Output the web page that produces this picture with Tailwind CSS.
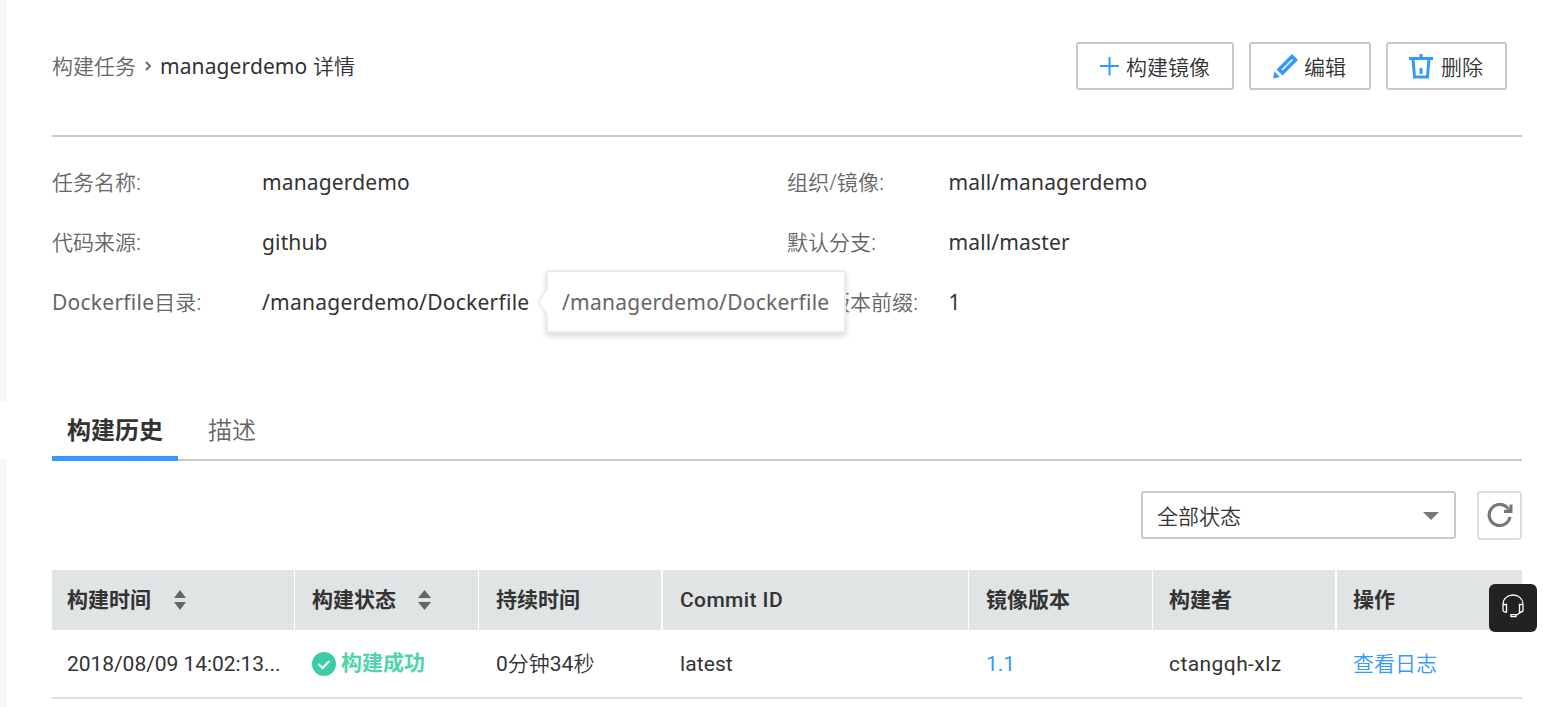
<!DOCTYPE html>
<html lang="zh-CN">
<head>
<meta charset="utf-8">
<title>managerdemo 详情</title>
<script src="https://cdn.jsdelivr.net/npm/@tailwindcss/browser@4"></script>
</head>
<body class="bg-white">
<div class="relative flex h-[707px] w-[1554px] overflow-hidden font-['Noto_Sans','Noto_Sans_CJK_SC',sans-serif] text-[21px] leading-[30px] text-[#333]">
  <aside class="flex w-[7px] shrink-0 flex-col justify-between">
    <div class="h-[402px] bg-[#f6f7f7]"></div>
    <div class="h-[248px] bg-[#f6f7f7]"></div>
  </aside>
  <main class="ml-[45px] w-[1470px]">
    <header class="flex h-[137px] items-start justify-between border-b-2 border-[#c9c9c9] pr-[15px]">
      <nav class="flex items-center pt-[51px]">
        <span class="font-[350] text-[#666]">构建任务</span>
        <svg class="ml-[9px] mr-[9px]" width="7" height="10" viewBox="0 0 7 10" fill="none" stroke="#666" stroke-width="1.8"><path d="M1 1l4 4-4 4"/></svg>
        <span class="-ml-px tracking-[0.1px]">managerdemo <span class="font-[350]">详情</span></span>
      </nav>
      <div class="flex gap-[15px] pt-[42px] font-[350]">
        <button class="flex h-12 w-[158px] items-center rounded-[3px] border-2 border-[#c9c9c9] pl-[21px] pt-[2px]">
          <svg width="21" height="20" viewBox="0 0 21 20" stroke="#3399ff" stroke-width="2"><path d="M1 9h19M10.500 0v18.500"/></svg>
          <span class="ml-[6px]">构建镜像</span>
        </button>
        <button class="flex h-12 w-[122px] items-center rounded-[3px] border-2 border-[#c9c9c9] pl-[22px] pt-[2px]">
          <svg class="-mt-[2px]" width="25" height="25" viewBox="0 0 25 25"><path d="M6 15.500L19 2.500l3.500 3.500L9.500 19z" fill="none" stroke="#3399ff" stroke-width="3.500"/><path d="M0 24.500l1.500-7 5.500 5.500z" fill="#3399ff"/></svg>
          <span class="ml-[6px]">编辑</span>
        </button>
        <button class="flex h-12 w-[121px] items-center rounded-[3px] border-2 border-[#c9c9c9] pl-[22px] pt-[2px]">
          <svg class="-ml-px -mt-[2px]" width="24" height="25" viewBox="0 0 24 25" fill="none" stroke="#3399ff"><path d="M0 4.500h24M4 5l1.500 18h13l1.500-18" stroke-width="3"/><path d="M12 0v4M12 14v6" stroke-width="3"/></svg>
          <span class="ml-[8px]">删除</span>
        </button>
      </div>
    </header>

    <section class="relative mt-[30px] grid grid-cols-[210px_525px_161.500px_1fr] auto-rows-[60px] tracking-[0.15px]">
      <span class="font-[350] tracking-normal text-[#666]">任务名称:</span><span>managerdemo</span>
      <span class="font-[350] text-[#666]">组织/镜像:</span><span>mall/managerdemo</span>
      <span class="font-[350] tracking-normal text-[#666]">代码来源:</span><span>github</span>
      <span class="font-[350] tracking-normal text-[#666]">默认分支:</span><span>mall/master</span>
      <span class="font-[350] tracking-normal text-[#666]"><span class="font-normal tracking-[0.25px]">Dockerfile</span>目录:</span><span class="tracking-[0.25px]">/managerdemo/Dockerfile</span>
      <span class="font-[350] tracking-normal text-[#666]">镜像版本前缀:</span><span>1</span>
      <div class="absolute left-[494px] top-[103px] flex h-[63px] w-[300px] items-center rounded-[2px] border-2 border-[#ececec] bg-white pl-[14px] text-[#666] shadow-[0_3px_6px_rgba(0,0,0,0.16)]">
        <svg class="absolute -left-[12px] top-[14px]" width="13" height="32" viewBox="0 0 13 32"><path d="M12 1.500L2 16l10 14.500" fill="#fff" stroke="#ececec" stroke-width="2"/><path d="M13 0v32h-1V0z" fill="#fff"/></svg>
        <span class="tracking-[0.25px]">/managerdemo/Dockerfile</span>
      </div>
    </section>

    <nav class="mt-[56px] flex h-[58px] items-stretch border-b-2 border-[#c9c9c9] text-2xl">
      <a class="relative w-[126px] pl-[15px] pt-[11px] font-bold">构建历史<span class="absolute -bottom-[2px] left-0 h-[5px] w-full bg-[#3399ff]"></span></a>
      <a class="pl-[30px] pt-[11px] font-[350] text-[#666]">描述</a>
    </nav>

    <div class="mt-[30px] flex justify-end gap-[21px]">
      <div class="flex h-12 w-[315px] items-center justify-between rounded-[3px] border-2 border-[#c9c9c9] pl-[14px] pr-[15px] pt-[2px] font-[350]">
        <span>全部状态</span>
        <svg width="16" height="8" viewBox="0 0 16 8"><path d="M0 0h16L8 8z" fill="#777"/></svg>
      </div>
      <button class="flex h-[49px] w-[45px] items-center justify-center rounded-[4px] border-2 border-[#ddd]">
        <svg width="26" height="26" viewBox="0 0 26 26"><path d="M21 5.500A10.500 10.500 0 1 0 23 14" fill="none" stroke="#777" stroke-width="3.200"/><path d="M25.500 1.500v8.500h-8.500v-3l3.500-.5 2-2V1.500z" fill="#777"/></svg>
      </button>
    </div>

    <div class="mt-[30px] font-[Roboto,'Noto_Sans_CJK_SC',sans-serif]">
      <div class="grid h-[60px] grid-cols-[243px_184px_184px_306px_184px_184px_185px] bg-[#e0e4e5] font-bold [&>*]:flex [&>*]:items-center [&>*]:border-white [&>*]:pl-[15px]">
        <div class="border-r">构建时间<svg class="ml-[23px]" width="12" height="20" viewBox="0 0 12 20" fill="#666"><path d="M0 8L6 0l6 8zM0 12h12l-6 8z"/></svg></div>
        <div class="border-r"><span class="ml-[2px]">构建状态</span><svg class="ml-[22px]" width="13" height="20" viewBox="0 0 13 20" fill="#666"><path d="M0 8L6.500 0l6.500 8zM0 12h13l-6.500 8z"/></svg></div>
        <div class="border-r-2"><span class="ml-[2px]">持续时间</span></div>
        <div class="border-r font-medium"><span class="ml-[2px] tracking-[0.4px]">Commit ID</span></div>
        <div class="border-r"><span class="ml-[2px]">镜像版本</span></div>
        <div class="border-r-2"><span class="ml-px">构建者</span></div>
        <div><span class="ml-px">操作</span></div>
      </div>
      <div class="grid h-[69px] grid-cols-[243px_184px_184px_306px_184px_184px_185px] border-b-2 border-[#ddd] [&>*]:flex [&>*]:items-center [&>*]:pl-[15px]">
        <div class="tracking-[-0.05px]">2018/08/09 14:02:13...</div>
        <div class="font-bold text-[#50d4ab]"><svg class="ml-[2px] mr-[5px]" width="24" height="24" viewBox="0 0 24 24"><circle cx="12" cy="12" r="12" fill="#3dcca6"/><path d="M6.500 12l4 4 7-7" fill="none" stroke="#fff" stroke-width="2"/></svg><span class="-mt-[2px]">构建成功</span></div>
        <div><span class="ml-[2px]">0<span class="font-[350]">分钟</span>34<span class="font-[350]">秒</span></span></div>
        <div><span class="ml-[2px] tracking-[0.1px]">latest</span></div>
        <div class="text-[#3399ff]"><span class="ml-[2px]">1.1</span></div>
        <div><span class="ml-px tracking-[0.42px]">ctangqh-xlz</span></div>
        <div class="font-[350] text-[#3399ff]"><span class="ml-px">查看日志</span></div>
      </div>
    </div>
  </main>
  <button class="absolute left-[1489px] top-[584px] flex h-12 w-12 items-center justify-center rounded-[6px] bg-[#222]">
    <svg class="-mt-[4px]" width="24" height="24" viewBox="0 0 24 24" fill="none" stroke="#fff" stroke-width="1.300"><path d="M2 11V10a10 9 0 0 1 20 0v1M2 10.500h3.500v7.500H4a2 2 0 0 1-2-2zM18.500 10.500H22V16a2 2 0 0 1-2 2h-1.500zM19.500 18.500l-4 2.500M10 20.700h5v2h-5z"/></svg>
  </button>
</div>
</body>
</html>
